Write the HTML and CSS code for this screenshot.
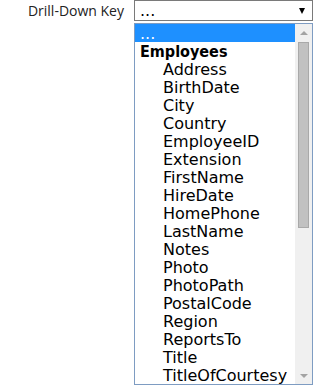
FILE: index.html
```html
<!DOCTYPE html>
<html lang="en">
<head>
  <meta charset="UTF-8" />
  <title>Drill-Down Key</title>
  <link rel="stylesheet" href="styles.css">
</head>
<body>
  <div class="row">
    <label class="label">Drill-Down Key</label>
    <div class="field">
      <div class="select">
        <span class="value">...</span>
        <span class="arrow"></span>
      </div>
      <div class="list">
        <div class="options">
          <div class="opt selected">...</div>
          <div class="opt group">Employees</div>
          <div class="opt child">Address</div>
          <div class="opt child">BirthDate</div>
          <div class="opt child">City</div>
          <div class="opt child">Country</div>
          <div class="opt child">EmployeeID</div>
          <div class="opt child">Extension</div>
          <div class="opt child">FirstName</div>
          <div class="opt child">HireDate</div>
          <div class="opt child">HomePhone</div>
          <div class="opt child">LastName</div>
          <div class="opt child">Notes</div>
          <div class="opt child">Photo</div>
          <div class="opt child">PhotoPath</div>
          <div class="opt child">PostalCode</div>
          <div class="opt child">Region</div>
          <div class="opt child">ReportsTo</div>
          <div class="opt child">Title</div>
          <div class="opt child">TitleOfCourtesy</div>
        </div>
        <div class="scrollbar">
          <span class="up"></span>
          <div class="thumb"></div>
          <span class="down"></span>
        </div>
      </div>
    </div>
  </div>
</body>
</html>
```
FILE: styles.css
```css
body {
  margin: 0;
  background: #fff;
  font-family: "DejaVu Sans", sans-serif;
  color: #000;
}
.row {
  display: flex;
  align-items: flex-start;
}
.label {
  width: 124px;
  padding: 1px 10px 0 0;
  text-align: right;
  font-family: "Open Sans", sans-serif;
  font-size: 14px;
  line-height: 20px;
  color: #222;
}
.field {
  width: 179px;
  display: flex;
  flex-direction: column;
  gap: 2px;
}
.select {
  height: 19px;
  border: 1px solid #7a7a7a;
  display: flex;
  align-items: center;
  justify-content: space-between;
  padding: 0 7px 0 5px;
  font-size: 16px;
}
.value {
  line-height: 19px;
}
.arrow {
  width: 0;
  height: 0;
  margin-top: 1px;
  border-left: 3px solid transparent;
  border-right: 3px solid transparent;
  border-top: 6px solid #000;
}
.list {
  height: 360px;
  border: 1px solid #7e9cc2;
  display: flex;
  overflow: hidden;
}
.options {
  flex: 1;
  overflow: hidden;
}
.opt {
  height: 17px;
  padding-top: 1px;
  line-height: 17px;
  font-size: 16px;
  padding-left: 5px;
  white-space: nowrap;
  overflow: hidden;
}
.selected {
  background: #1e90ff;
  color: #fff;
}
.group {
  font-family: "DejaVu Sans Condensed", "DejaVu Sans", sans-serif;
  font-weight: bold;
}
.child {
  padding-left: 28px;
}
.scrollbar {
  width: 17px;
  background: #f0f0f0;
  display: flex;
  flex-direction: column;
  align-items: center;
}
.thumb {
  width: 9px;
  height: 184px;
  margin-top: 1px;
  background: #c1c1c1;
  border: 1px solid #a9a9a9;
}
.up, .down {
  width: 0;
  height: 0;
  border-left: 4px solid transparent;
  border-right: 4px solid transparent;
}
.up {
  margin-top: 7px;
  margin-bottom: 6px;
  border-bottom: 4px solid #a3a3a3;
}
.down {
  margin-top: auto;
  margin-bottom: 6px;
  border-top: 4px solid #a3a3a3;
}
```
